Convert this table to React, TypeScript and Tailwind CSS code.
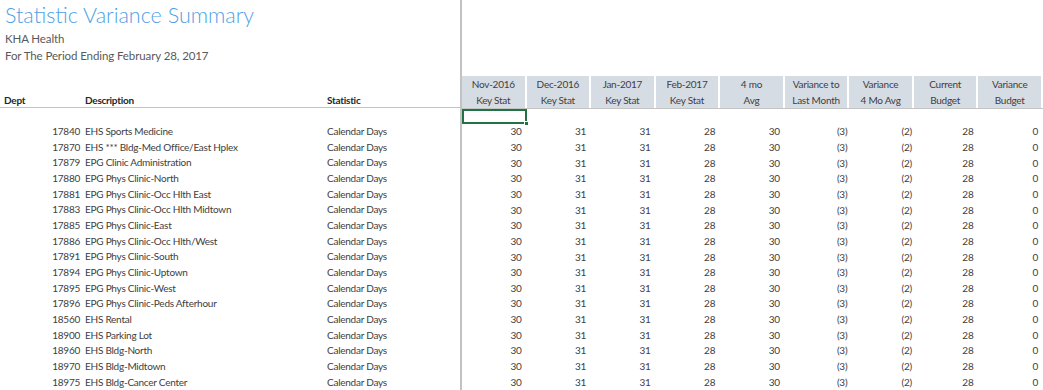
import React from 'react'

const rows: [string, string][] = [
  ['17840', 'EHS Sports Medicine'],
  ['17870', 'EHS *** Bldg-Med Office/East Hplex'],
  ['17879', 'EPG Clinic Administration'],
  ['17880', 'EPG Phys Clinic-North'],
  ['17881', 'EPG Phys Clinic-Occ Hlth East'],
  ['17883', 'EPG Phys Clinic-Occ Hlth Midtown'],
  ['17885', 'EPG Phys Clinic-East'],
  ['17886', 'EPG Phys Clinic-Occ Hlth/West'],
  ['17891', 'EPG Phys Clinic-South'],
  ['17894', 'EPG Phys Clinic-Uptown'],
  ['17895', 'EPG Phys Clinic-West'],
  ['17896', 'EPG Phys Clinic-Peds Afterhour'],
  ['18560', 'EHS Rental'],
  ['18900', 'EHS Parking Lot'],
  ['18960', 'EHS Bldg-North'],
  ['18970', 'EHS Bldg-Midtown'],
  ['18975', 'EHS Bldg-Cancer Center'],
]

const headers: [string, string][] = [
  ['Nov-2016', 'Key Stat'],
  ['Dec-2016', 'Key Stat'],
  ['Jan-2017', 'Key Stat'],
  ['Feb-2017', 'Key Stat'],
  ['4 mo', 'Avg'],
  ['Variance to', 'Last Month'],
  ['Variance', '4 Mo Avg'],
  ['Current', 'Budget'],
  ['Variance', 'Budget'],
]

const values = ['30', '31', '31', '28', '30', '(3)', '(2)', '28', '0']

export default function App() {
  return (
    <div className="flex h-[390px] w-[1043px] overflow-hidden bg-white font-['Lato',sans-serif] text-[10px] tracking-[-0.25px] text-[#404040]">
      {/* left frozen pane */}
      <div className="flex w-[460px] shrink-0 flex-col">
        <div className="flex h-[77px] flex-col px-[5px]">
          <div className="mt-[2px] text-[21.5px] leading-[26px] font-light tracking-normal text-[#4f9fe6]">Statistic Variance Summary</div>
          <div className="mt-[3px] text-[11.5px] leading-[15px] tracking-[-0.1px] text-[#595959]">KHA Health</div>
          <div className="mt-[2px] text-[11.5px] leading-[15px] tracking-[-0.1px] text-[#595959]">For The Period Ending February 28, 2017</div>
        </div>
        <div className="flex h-[33px] items-end border-b border-[#c4c4c4] pb-0 leading-[14px] font-bold text-[#262626]">
          <div className="w-[81px] pl-[4px]">Dept</div>
          <div className="w-[242px] pl-[4px]">Description</div>
          <div className="pl-[4px]">Statistic</div>
        </div>
        <div className="h-[15.8px]" />
        {rows.map(([dept, desc]) => (
          <div key={dept} className="flex h-[15.95px] items-center">
            <div className="w-[81px] pr-[1px] text-right">{dept}</div>
            <div className="w-[242px] pl-[4px]">{desc}</div>
            <div className="pl-[4px]">Calendar Days</div>
          </div>
        ))}
      </div>

      {/* frozen pane divider */}
      <div className="w-[2px] shrink-0 bg-[#c2c2c2]" />

      {/* right pane */}
      <div className="flex flex-1 flex-col">
        <div className="h-[77px]" />
        <div className="grid h-[33px] grid-cols-9 border-b border-[#c4c4c4] pb-[2px]">
          {headers.map(([a, b], i) => (
            <div key={i} className="mr-[2px] flex flex-col items-center justify-center bg-[#d6dce4] leading-[16px] text-[#404040]">
              <span>{a}</span>
              <span>{b}</span>
            </div>
          ))}
        </div>
        <div className="grid h-[15.8px] grid-cols-9">
          <div className="relative border-2 border-[#217346]">
            <div className="absolute -right-[4px] -bottom-[4px] h-[5px] w-[5px] border border-white bg-[#217346]" />
          </div>
        </div>
        {rows.map(([dept]) => (
          <div key={dept} className="grid h-[15.95px] grid-cols-9 items-center">
            {values.map((v, i) => (
              <div key={i} className={v.startsWith('(') ? 'pr-[2px] text-right' : 'pr-[5px] text-right'}>
                {v}
              </div>
            ))}
          </div>
        ))}
      </div>
    </div>
  )
}
